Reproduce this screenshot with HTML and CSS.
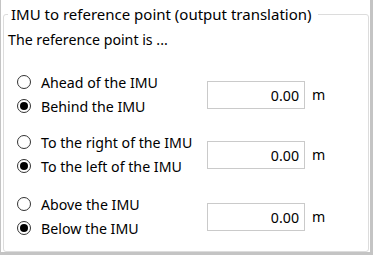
FILE: index.html
```html
<!DOCTYPE html>
<html>
<head>
<meta charset="utf-8">
<link rel="stylesheet" href="styles.css">
</head>
<body>
<div class="frame">
  <fieldset class="group">
    <legend class="group-title">IMU to reference point (output translation)</legend>
    <p class="intro">The reference point is ...</p>
    <div class="rows">
      <div class="pair">
        <div class="choices">
          <label class="radio"><span class="dot"></span>Ahead of the IMU</label>
          <label class="radio"><span class="dot checked"></span>Behind the IMU</label>
        </div>
        <div class="field"><span class="box">0.00</span><span class="unit">m</span></div>
      </div>
      <div class="pair">
        <div class="choices">
          <label class="radio"><span class="dot"></span>To the right of the IMU</label>
          <label class="radio"><span class="dot checked"></span>To the left of the IMU</label>
        </div>
        <div class="field"><span class="box">0.00</span><span class="unit">m</span></div>
      </div>
      <div class="pair last">
        <div class="choices">
          <label class="radio"><span class="dot"></span>Above the IMU</label>
          <label class="radio"><span class="dot checked"></span>Below the IMU</label>
        </div>
        <div class="field"><span class="box">0.00</span><span class="unit">m</span></div>
      </div>
    </div>
  </fieldset>
</div>
</body>
</html>
```

FILE: styles.css
```css
html, body {
  margin: 0;
  padding: 0;
  background: #ffffff;
}
body {
  font-family: "Noto Sans", "Open Sans", sans-serif;
  font-size: 14.2px;
  color: #000000;
}
.frame {
  width: 373px;
  height: 255px;
  box-sizing: border-box;
  border-left: 1px solid #c4c4c4;
  border-right: 3px solid #c4c4c4;
  border-bottom: 3px solid #c4c4c4;
  padding: 4px 1px 0 2px;
  background: #ffffff;
}
.group {
  margin: 0;
  height: 248px;
  box-sizing: border-box;
  border: 1px solid #dcdcdc;
  border-radius: 3px;
  padding: 0 0 0 4px;
}
.group-title {
  padding: 0 6px 0 3px;
  line-height: 20px;
  height: 20px;
  font-size: 15px;
}
.intro {
  margin: 6px 0 0 0;
  line-height: 20px;
}
.rows {
  display: flex;
  flex-direction: column;
  gap: 12px;
  margin-top: 20px;
}
.pair {
  display: flex;
  align-items: center;
}
.pair.last {
  margin-top: 2px;
}
.choices {
  display: flex;
  flex-direction: column;
  width: 190px;
  padding-left: 9px;
}
.radio {
  display: flex;
  align-items: center;
  height: 24px;
  gap: 10px;
}
.dot {
  width: 14px;
  height: 14px;
  box-sizing: border-box;
  border: 1px solid #333333;
  border-radius: 50%;
  display: flex;
  align-items: center;
  justify-content: center;
  flex: none;
}
.dot.checked::after {
  content: "";
  width: 8px;
  height: 8px;
  border-radius: 50%;
  background: #000000;
}
.field {
  display: flex;
  align-items: center;
  gap: 7px;
  margin-top: 2px;
}
.box {
  width: 98px;
  height: 28px;
  box-sizing: border-box;
  border: 1px solid #cacaca;
  display: flex;
  align-items: center;
  justify-content: flex-end;
  padding-right: 5px;
}
.unit {
  line-height: 20px;
}
```
